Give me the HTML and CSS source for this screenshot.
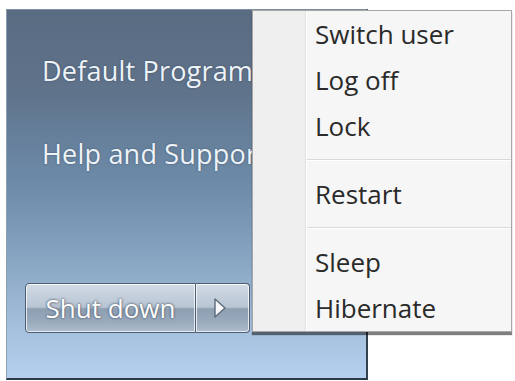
FILE: index.html
```html
<!DOCTYPE html>
<html>
<head>
<meta charset="utf-8">
<link rel="stylesheet" href="styles.css">
</head>
<body>
<div class="stage">
  <div class="panel">
    <div class="links">
      <div class="link first">Default Programs</div>
      <div class="link">Help and Support</div>
    </div>
    <div class="shutdown">
      <div class="btn main">Shut down</div>
      <div class="btn arrow">
        <svg width="18" height="26" viewBox="0 0 18 26"><path d="M4 4 L14 13 L4 22 Z" fill="#f6f8fa" stroke="#5c6a7a" stroke-width="1.4" stroke-linejoin="round"/></svg>
      </div>
    </div>
  </div>
  <div class="menu">
    <div class="gutter"></div>
    <div class="items">
      <div class="item">Switch user</div>
      <div class="item">Log off</div>
      <div class="item">Lock</div>
      <div class="sep"></div>
      <div class="item">Restart</div>
      <div class="sep"></div>
      <div class="item">Sleep</div>
      <div class="item">Hibernate</div>
    </div>
  </div>
</div>
</body>
</html>
```

FILE: styles.css
```css
html, body {
  margin: 0;
  padding: 0;
  background: #ffffff;
  width: 515px;
  height: 381px;
  overflow: hidden;
}

.stage {
  position: relative;
  width: 515px;
  height: 381px;
  padding-top: 9px;
  padding-left: 6px;
  box-sizing: border-box;
}

.panel {
  width: 362px;
  height: 371px;
  box-sizing: border-box;
  border-left: 1px solid #8d9fb3;
  border-top: 1px solid #7c8ea2;
  border-right: 2px solid #34404e;
  border-bottom: 2px solid #2c3846;
  background: linear-gradient(to bottom, #596b81 0%, #5f738b 22%, #6d8caa 48%, #8ba8c5 70%, #a5c1de 87%, #b4d0ee 100%);
  display: flex;
  flex-direction: column;
  font-family: "Open Sans", "Noto Sans", sans-serif;
}

.links {
  padding-left: 35px;
  display: flex;
  flex-direction: column;
}

.link {
  color: #eef3f8;
  font-size: 27px;
  letter-spacing: 0.2px;
  line-height: 36px;
  white-space: nowrap;
  text-shadow: 0 0 2px rgba(40, 55, 75, 0.6);
}

.link.first {
  margin-top: 43px;
}

.link + .link {
  margin-top: 47px;
}

.shutdown {
  margin-top: auto;
  margin-bottom: 45px;
  margin-left: 18px;
  display: flex;
  height: 50px;
}

.btn {
  box-sizing: border-box;
  height: 50px;
  border: 1px solid #4e5e72;
  box-shadow: inset 0 0 0 1px rgba(255, 255, 255, 0.75);
  background: linear-gradient(to bottom, #d2dbe5 0%, #b8c5d3 48%, #8e9fb2 52%, #9aabbd 80%, #aebdcd 100%);
  display: flex;
  align-items: center;
  justify-content: center;
}

.btn.main {
  width: 171px;
  border-radius: 4px 0 0 4px;
  color: #ffffff;
  font-size: 26px;
  text-shadow: 0 0 2px #4a5566, 0 0 3px #6a7788;
}

.btn.arrow {
  width: 54px;
  border-left: none;
  border-radius: 0 4px 4px 0;
  padding-right: 6px;
}

.menu {
  position: absolute;
  left: 252px;
  top: 10px;
  width: 260px;
  height: 322px;
  box-sizing: border-box;
  border: 1px solid #a7a7a7;
  background: #f6f6f6;
  box-shadow: 0 3px 1px rgba(0, 0, 0, 0.5);
  display: flex;
  font-family: "Open Sans", "Noto Sans", sans-serif;
}

.gutter {
  width: 52px;
  background: #efefef;
  border-right: 1px solid #e0e0e0;
  box-shadow: 1px 0 0 #ffffff;
}

.items {
  flex: 1;
  display: flex;
  flex-direction: column;
  padding-left: 1px;
}

.item {
  height: 46px;
  line-height: 46px;
  font-size: 26px;
  font-weight: 500;
  color: #2a2a2a;
  padding-left: 8px;
  white-space: nowrap;
}

.sep {
  height: 22px;
}

.sep::after {
  content: "";
  display: block;
  margin-top: 10px;
  height: 1px;
  background: #d9d9d9;
  border-bottom: 1px solid #ffffff;
}
```
